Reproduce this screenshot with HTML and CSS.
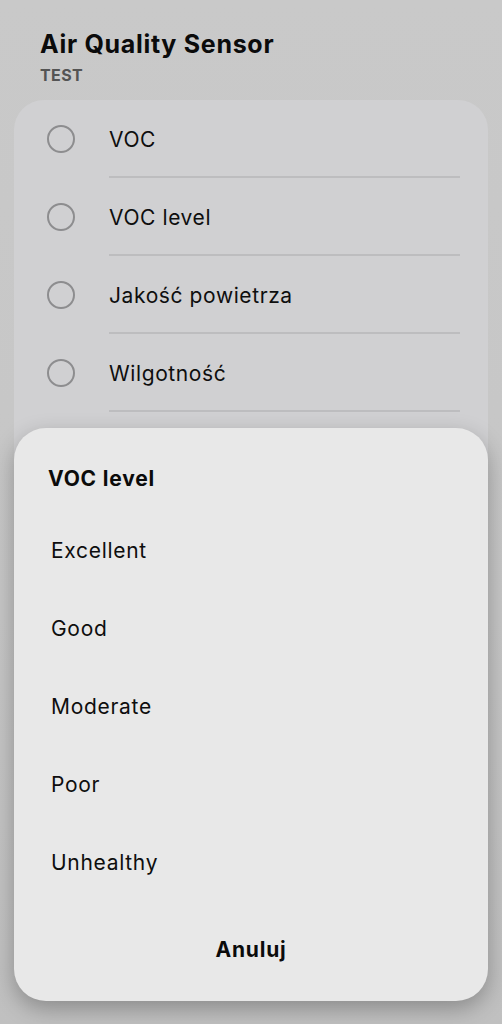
FILE: index.html
```html
<!DOCTYPE html>
<html lang="pl">
<head>
<meta charset="utf-8">
<link rel="stylesheet" href="styles.css">
</head>
<body>
<div class="screen">
  <header class="header">
    <h1 class="title">Air Quality Sensor</h1>
    <div class="subtitle">TEST</div>
  </header>
  <div class="list-card">
    <div class="row"><span class="radio"></span><span class="row-label">VOC</span></div>
    <div class="row"><span class="radio"></span><span class="row-label">VOC level</span></div>
    <div class="row"><span class="radio"></span><span class="row-label">Jakość powietrza</span></div>
    <div class="row"><span class="radio"></span><span class="row-label">Wilgotność</span></div>
  </div>

  <div class="sheet">
    <div class="sheet-title">VOC level</div>
    <div class="options">
      <div class="option">Excellent</div>
      <div class="option">Good</div>
      <div class="option">Moderate</div>
      <div class="option">Poor</div>
      <div class="option">Unhealthy</div>
    </div>
    <div class="cancel">Anuluj</div>
  </div>
</div>
</body>
</html>
```

FILE: styles.css
```css
* { box-sizing: border-box; }
html, body {
  margin: 0;
  padding: 0;
  height: 100%;
}
body {
  font-family: Inter, Roboto, "Noto Sans", sans-serif;
  color: #0d0d0d;
  background: linear-gradient(#c9c9c9 0%, #c6c6c6 60%, #c0c0c0 100%);
  overflow: hidden;
}
.screen {
  position: relative;
  width: 502px;
  height: 1024px;
  overflow: hidden;
}
.header {
  padding: 28px 40px 0 40px;
  height: 100px;
}
.title {
  margin: 0;
  font-size: 25px;
  font-weight: 700;
  line-height: 32px;
  letter-spacing: 0.7px;
  color: #0b0b0b;
}
.subtitle {
  margin-top: 5px;
  font-size: 16px;
  font-weight: 700;
  line-height: 20px;
  color: #545454;
  letter-spacing: 0.4px;
}
.list-card {
  margin: 0 14px;
  height: 820px;
  background: #d0d0d2;
  border-radius: 30px;
  padding-left: 32px;
  padding-right: 28px;
}
.row {
  display: flex;
  align-items: center;
  height: 78px;
  position: relative;
}
.row::after {
  content: "";
  position: absolute;
  left: 63px;
  right: 0;
  bottom: 0;
  height: 2px;
  background: #bdbdbf;
}
.radio {
  width: 28px;
  height: 28px;
  border: 2px solid #8d8d8f;
  border-radius: 50%;
  flex: none;
  margin-left: 1px;
}
.row-label {
  margin-left: 34px;
  font-size: 21px;
  letter-spacing: 0.6px;
  color: #0e0e0e;
}
.sheet {
  position: absolute;
  left: 14px;
  right: 14px;
  top: 428px;
  height: 573px;
  background: #e8e8e8;
  border-radius: 32px;
  box-shadow: 0 8px 22px rgba(0, 0, 0, 0.28);
  display: flex;
  flex-direction: column;
  padding: 36px 0 0 0;
}
.sheet-title {
  padding-left: 34px;
  font-size: 21px;
  font-weight: 700;
  line-height: 30px;
  letter-spacing: 0.8px;
  color: #0b0b0b;
}
.options {
  margin-top: 17px;
  display: flex;
  flex-direction: column;
}
.option {
  height: 78px;
  display: flex;
  align-items: center;
  padding-left: 37px;
  font-size: 21px;
  letter-spacing: 0.7px;
  color: #0e0e0e;
}
.cancel {
  margin-top: 9px;
  height: 78px;
  display: flex;
  align-items: center;
  justify-content: center;
  font-size: 21px;
  font-weight: 700;
  letter-spacing: 0.8px;
  color: #0b0b0b;
}
```
